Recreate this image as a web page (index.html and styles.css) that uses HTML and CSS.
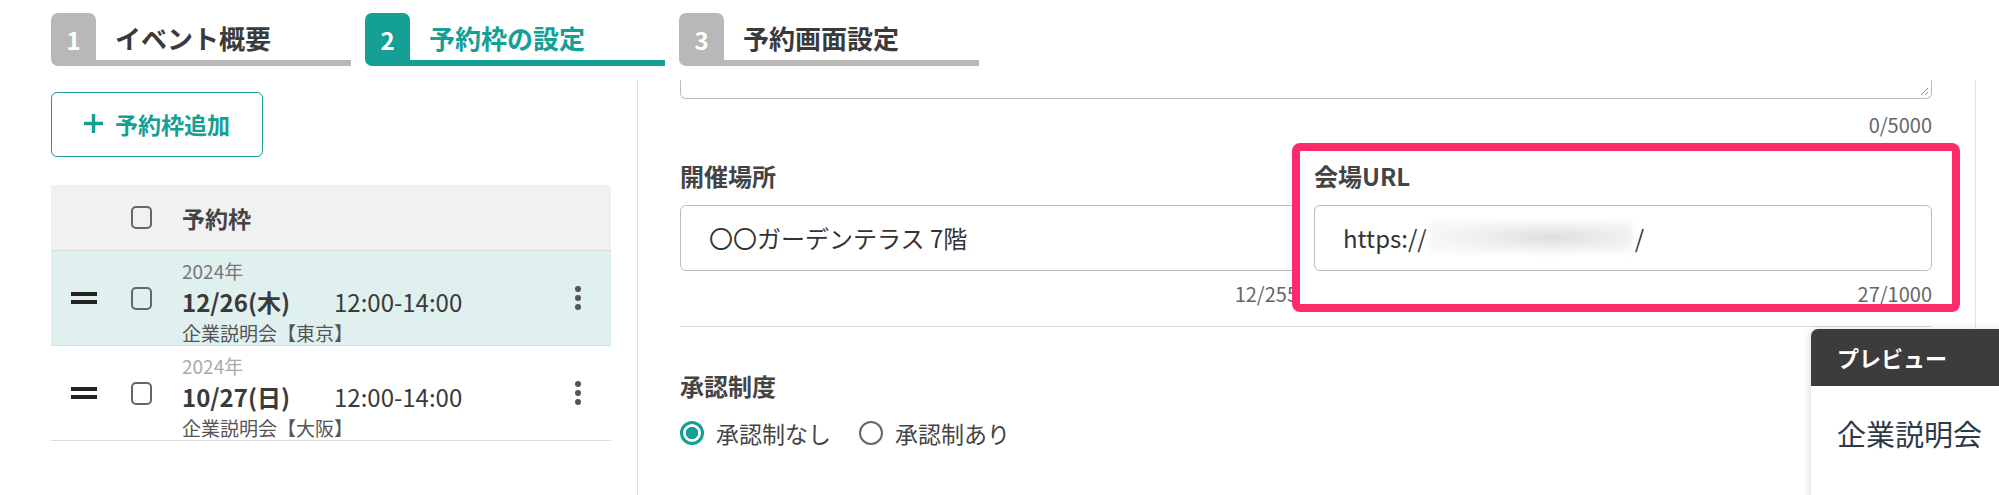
FILE: index.html
```html
<!DOCTYPE html>
<html lang="ja">
<head>
    <meta charset="UTF-8">
    <meta name="viewport" content="width=device-width, initial-scale=1.0">
    <title>予約枠の設定</title>
    <link rel="stylesheet" href="styles.css">
</head>
<body>
    <div id="steps">
        <div class="step">
            <div class="step-num">1</div>
            <div class="step-label">イベント概要</div>
        </div>
        <div class="step active">
            <div class="step-num">2</div>
            <div class="step-label">予約枠の設定</div>
        </div>
        <div class="step">
            <div class="step-num">3</div>
            <div class="step-label">予約画面設定</div>
        </div>
    </div>

    <div id="main">
        <div id="slots">
            <button class="add-btn">
                <svg width="19" height="19" viewBox="0 0 19 19"><path d="M9.5 0v19M0 9.5h19" stroke="#14a094" stroke-width="3.4"/></svg>
                予約枠追加
            </button>

            <div class="slot-table">
                <div class="slot-head">
                    <span class="handle-col"></span>
                    <span class="check"></span>
                    <span class="head-title">予約枠</span>
                </div>
                <div class="slot-row selected">
                    <span class="handle-col"><span class="handle"></span></span>
                    <span class="check"></span>
                    <div class="slot-info">
                        <div class="slot-year">2024年</div>
                        <div class="slot-date"><b>12/26(木)</b><span class="slot-time">12:00-14:00</span></div>
                        <div class="slot-name">企業説明会【東京】</div>
                    </div>
                    <span class="kebab"><i></i><i></i><i></i></span>
                </div>
                <div class="slot-row">
                    <span class="handle-col"><span class="handle"></span></span>
                    <span class="check"></span>
                    <div class="slot-info">
                        <div class="slot-year light">2024年</div>
                        <div class="slot-date"><b>10/27(日)</b><span class="slot-time">12:00-14:00</span></div>
                        <div class="slot-name">企業説明会【大阪】</div>
                    </div>
                    <span class="kebab"><i></i><i></i><i></i></span>
                </div>
            </div>
        </div>

        <div id="form">
            <div class="textarea-end">
                <svg class="grip" width="10" height="10" viewBox="0 0 10 10"><path d="M9 2L2 9M9 6L6 9" stroke="#888" stroke-width="1"/></svg>
            </div>
            <div class="counter">0/5000</div>

            <div class="field-row">
                <div class="field">
                    <div class="field-label">開催場所</div>
                    <div class="input">〇〇ガーデンテラス 7階</div>
                    <div class="counter">12/255</div>
                </div>
                <div class="field">
                    <div class="field-label">会場URL</div>
                    <div class="input">https://<span class="masked"></span>/</div>
                    <div class="counter">27/1000</div>
                </div>
            </div>

            <hr class="divider">

            <div class="field-label approval">承認制度</div>
            <div class="radios">
                <label class="radio checked"><span class="dot"></span>承認制なし</label>
                <label class="radio"><span class="dot"></span>承認制あり</label>
            </div>
        </div>
    </div>

    <div class="highlight"></div>

    <div class="preview">
        <div class="preview-head">プレビュー</div>
        <div class="preview-body">企業説明会</div>
    </div>
</body>
</html>
```

FILE: styles.css
```css
body {
    margin: 0;
    height: 495px;
    overflow: hidden;
    font-family: "Noto Sans CJK JP", "Noto Sans", sans-serif;
    color: #3a3a3a;
    background-color: #fff;
    position: relative;
}

#steps {
    height: 80px;
    display: flex;
    gap: 14px;
    padding: 13px 0 0 51px;
    box-sizing: border-box;
}

.step {
    display: flex;
    width: 300px;
    height: 53px;
}

.step-num {
    width: 45px;
    line-height: 53px;
    text-align: center;
    color: #fff;
    font-size: 24px;
    font-weight: bold;
    background-color: #b8b8b8;
    border-radius: 7px 7px 0 7px;
}

.step-label {
    flex: 1;
    box-sizing: border-box;
    padding: 4px 0 0 19px;
    line-height: 41px;
    font-size: 26px;
    font-weight: bold;
    border-bottom: 6px solid #b8b8b8;
}

.step.active .step-num {
    background-color: #14a094;
}

.step.active .step-label {
    color: #14a094;
    border-bottom-color: #14a094;
}

#main {
    display: flex;
    height: 415px;
}

#slots {
    width: 638px;
    box-sizing: border-box;
    padding: 12px 27px 0 51px;
    border-right: 1px solid #dedede;
}

.add-btn {
    width: 212px;
    height: 65px;
    display: flex;
    align-items: center;
    justify-content: center;
    gap: 12px;
    font-family: inherit;
    font-size: 23px;
    font-weight: bold;
    color: #14a094;
    background-color: #fff;
    border: 1.5px solid #14a094;
    border-radius: 6px;
    padding: 0 0 2px;
}

.slot-table {
    margin-top: 28px;
    width: 560px;
}

.slot-head,
.slot-row {
    display: flex;
    align-items: center;
}

.slot-head {
    height: 66px;
    background-color: #f1f1f3;
    border-bottom: 1px solid #dcdcdc;
    box-sizing: border-box;
}

.head-title {
    font-size: 23px;
    font-weight: bold;
    color: #444;
}

.slot-row {
    height: 95px;
    border-bottom: 1px solid #dcdcdc;
    box-sizing: border-box;
}

.slot-row.selected {
    background-color: #dff0ef;
}

.handle-col {
    width: 80px;
    display: flex;
    justify-content: flex-end;
}

.handle {
    width: 26px;
    height: 4px;
    border-top: 4px solid #222;
    border-bottom: 4px solid #222;
    margin-right: 34px;
}

.check {
    width: 21px;
    height: 23px;
    box-sizing: border-box;
    border: 2px solid #666;
    border-radius: 5px;
    margin: 0 30px 0 0;
}

.slot-info {
    flex: 1;
    margin-top: 8px;
}

.slot-year {
    font-size: 19px;
    line-height: 24px;
    color: #777;
}

.slot-year.light {
    color: #aaa;
}

.slot-date {
    font-size: 24px;
    line-height: 38px;
    color: #3a3a3a;
}

.slot-date b {
    display: inline-block;
    width: 152px;
}

.slot-name {
    font-size: 19px;
    line-height: 24px;
    color: #555;
}

.kebab {
    display: flex;
    flex-direction: column;
    gap: 3px;
    margin-right: 30px;
}

.kebab i {
    width: 6px;
    height: 6px;
    border-radius: 50%;
    background-color: #555;
}

#form {
    width: 1338px;
    box-sizing: border-box;
    padding: 0 43px 0 42px;
    border-right: 1px solid #e3e3e3;
}

.textarea-end {
    height: 18px;
    border: 1px solid #bbb;
    border-top: none;
    border-radius: 0 0 6px 6px;
    position: relative;
}

.grip {
    position: absolute;
    right: 2px;
    bottom: 2px;
}

.counter {
    text-align: right;
    font-size: 20px;
    line-height: 24px;
    color: #666;
    margin-top: 14px;
}

.field-row {
    display: flex;
    gap: 16px;
    margin-top: 25px;
}

.field {
    flex: 1;
}

.field .counter {
    margin-top: 11px;
    white-space: nowrap;
}

.field-label {
    font-size: 24px;
    font-weight: bold;
    line-height: 28px;
    color: #444;
}

.input {
    height: 66px;
    margin-top: 15px;
    box-sizing: border-box;
    border: 1px solid #bbb;
    border-radius: 6px;
    padding: 0 0 2px 28px;
    display: flex;
    align-items: center;
    font-size: 24px;
    color: #333;
}

.masked {
    display: inline-block;
    width: 204px;
    height: 32px;
    margin: 0 2px;
    background: radial-gradient(ellipse at 60% 50%, #dadada 0%, #ececec 35%, #f7f7f7 70%);
    filter: blur(3px);
}

.divider {
    border: none;
    border-top: 1px solid #dcdcdc;
    margin: 20px 0 0;
}

.approval {
    margin-top: 45px;
}

.radios {
    display: flex;
    gap: 28px;
    margin-top: 19px;
    font-size: 23px;
    line-height: 28px;
    color: #444;
}

.radio {
    display: flex;
    align-items: center;
    gap: 12px;
}

.radio .dot {
    width: 24px;
    height: 24px;
    box-sizing: border-box;
    border: 2.5px solid #666;
    border-radius: 50%;
}

.radio.checked .dot {
    border: 3px solid #14a094;
    background: radial-gradient(circle, #14a094 0 6px, #fff 6.5px);
}

/* annotation frame drawn over the form */
.highlight {
    position: absolute;
    left: 1292px;
    top: 143px;
    width: 668px;
    height: 169px;
    box-sizing: border-box;
    border: 8px solid #fd2a6c;
    border-radius: 8px;
}

.preview {
    position: absolute;
    left: 1811px;
    top: 329px;
    width: 200px;
    height: 180px;
    background-color: #fff;
    box-shadow: -2px 0 8px rgba(0, 0, 0, 0.12);
    border-radius: 7px 0 0 0;
}

.preview-head {
    height: 57px;
    line-height: 57px;
    padding-left: 26px;
    font-size: 22px;
    font-weight: bold;
    color: #fff;
    background-color: #3c3c3c;
    border-radius: 7px 0 0 0;
}

.preview-body {
    padding: 33px 0 0 26px;
    font-size: 29px;
    line-height: 28px;
    color: #2f3a48;
}
```
